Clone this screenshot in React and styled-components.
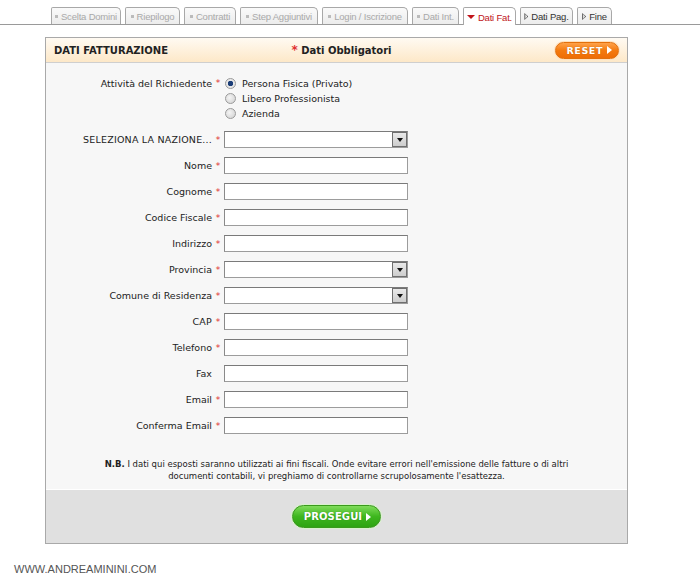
import React from "react";
import styled, { createGlobalStyle } from "styled-components";

const GlobalStyle = createGlobalStyle`
  body {
    margin: 0;
    background: #fff;
    font-family: "DejaVu Sans", Verdana, sans-serif;
  }
`;

const tabs = [
  { label: "Scelta Domini", state: "done", width: 70 },
  { label: "Riepilogo", state: "done", width: 55 },
  { label: "Contratti", state: "done", width: 52 },
  { label: "Step Aggiuntivi", state: "done", width: 78 },
  { label: "Login / Iscrizione", state: "done", width: 86 },
  { label: "Dati Int.", state: "done", width: 47 },
  { label: "Dati Fat.", state: "active", width: 53 },
  { label: "Dati Pag.", state: "next", width: 53 },
  { label: "Fine", state: "next", width: 35 },
];

const fields = [
  { label: "SELEZIONA LA NAZIONE...", required: true, select: true },
  { label: "Nome", required: true },
  { label: "Cognome", required: true },
  { label: "Codice Fiscale", required: true },
  { label: "Indirizzo", required: true },
  { label: "Provincia", required: true, select: true },
  { label: "Comune di Residenza", required: true, select: true },
  { label: "CAP", required: true },
  { label: "Telefono", required: true },
  { label: "Fax", required: false },
  { label: "Email", required: true },
  { label: "Conferma Email", required: true },
];

const App = () => {
  return (
    <>
      <GlobalStyle />
      <TabBar>
        {tabs.map((t) => (
          <Tab key={t.label} $state={t.state} style={{ width: t.width }}>
            {t.state === "done" && <Bullet />}
            {t.state === "active" && <DownArrow />}
            {t.state === "next" && <OutlineArrow />}
            {t.label}
          </Tab>
        ))}
      </TabBar>

      <Panel>
        <Header>
          <HeaderTitle>DATI FATTURAZIONE</HeaderTitle>
          <HeaderNote>
            <Star $big>*</Star> Dati Obbligatori
          </HeaderNote>
          <PillButton $color="orange" $small>
            RESET <Arrow />
          </PillButton>
        </Header>

        <Body>
          <RadioRow>
            <Label>Attività del Richiedente</Label>
            <Star>*</Star>
            <RadioList>
              <RadioItem>
                <Radio $checked />
                Persona Fisica (Privato)
              </RadioItem>
              <RadioItem>
                <Radio />
                Libero Professionista
              </RadioItem>
              <RadioItem>
                <Radio />
                Azienda
              </RadioItem>
            </RadioList>
          </RadioRow>

          <Fields>
            {fields.map((f) => (
              <FieldRow key={f.label}>
                <Label $caps={f.label === f.label.toUpperCase()}>{f.label}</Label>
                <Star>{f.required ? "*" : ""}</Star>
                <Input>
                  {f.select && (
                    <SelectButton>
                      <SelectArrow />
                    </SelectButton>
                  )}
                </Input>
              </FieldRow>
            ))}
          </Fields>

          <Note>
            <b>N.B.</b> I dati qui esposti saranno utilizzati ai fini fiscali. Onde evitare errori nell'emissione delle fatture o di altri
            <br />
            documenti contabili, vi preghiamo di controllarne scrupolosamente l'esattezza.
          </Note>
        </Body>

        <Footer>
          <PillButton $color="green">
            PROSEGUI <Arrow />
          </PillButton>
        </Footer>
      </Panel>

      <SiteName>WWW.ANDREAMININI.COM</SiteName>
    </>
  );
};

const TabBar = styled.div`
  display: flex;
  align-items: flex-end;
  gap: 4px;
  height: 25px;
  padding-left: 51px;
  border-bottom: 1px solid #9a9a9a;
  box-sizing: border-box;
`;

const Tab = styled.div`
  position: relative;
  box-sizing: border-box;
  height: ${(p) => (p.$state === "active" ? "18px" : "17px")};
  margin-bottom: ${(p) => (p.$state === "active" ? "-1px" : "0")};
  border: 1px solid #a8a8a8;
  border-bottom: none;
  border-radius: 2px 5px 0 0;
  background: ${(p) =>
    p.$state === "active" ? "#fff" : "linear-gradient(#fafafa, #ececec)"};
  color: ${(p) =>
    p.$state === "active" ? "#c0141a" : p.$state === "next" ? "#333" : "#a9a9a9"};
  font-family: "Liberation Sans", Arial, sans-serif;
  font-size: 9.5px;
  letter-spacing: -0.2px;
  display: flex;
  align-items: center;
  justify-content: center;
  white-space: nowrap;
  padding-top: 1px;
`;

const Bullet = styled.span`
  display: inline-block;
  width: 3px;
  height: 3px;
  background: #bbb;
  margin-right: 3px;
`;

const DownArrow = styled.span`
  display: inline-block;
  width: 0;
  height: 0;
  border-left: 4px solid transparent;
  border-right: 4px solid transparent;
  border-top: 4px solid #c0141a;
  margin-right: 3px;
`;

const OutlineArrow = styled.span`
  display: inline-block;
  width: 4px;
  height: 7px;
  margin-right: 3px;
  background: #555;
  clip-path: polygon(0 0, 100% 50%, 0 100%, 0 0, 1px 18%, 1px 82%, 72% 50%, 1px 18%);
`;

const Panel = styled.div`
  width: 583px;
  margin: 12px 0 0 45px;
  border: 1px solid #a9a9a9;
  box-sizing: border-box;
  background: #f7f7f7;
`;

const Header = styled.div`
  height: 24px;
  display: grid;
  grid-template-columns: 1fr auto 1fr;
  align-items: center;
  padding: 0 8px 0 8px;
  border-bottom: 1px solid #cfcfcf;
  background: linear-gradient(#fffaf2, #fde8c8);
`;

const HeaderTitle = styled.div`
  font-weight: bold;
  font-size: 10px;
  color: #222;
`;

const HeaderNote = styled.div`
  font-weight: bold;
  font-size: 10px;
  color: #222;
  padding-left: 10px;
`;

const Star = styled.span`
  color: #e03030;
  font-size: ${(p) => (p.$big ? "12px" : "9px")};
  font-weight: ${(p) => (p.$big ? "bold" : "normal")};
  text-align: center;
`;

const PillButton = styled.div`
  justify-self: ${(p) => (p.$small ? "end" : "center")};
  display: inline-flex;
  align-items: center;
  justify-content: center;
  gap: 4px;
  height: ${(p) => (p.$small ? "15px" : "21px")};
  padding: ${(p) => (p.$small ? "0 6px 0 10px" : "0 9px 0 11px")};
  border-radius: 12px;
  color: #fff;
  font-family: "DejaVu Sans", sans-serif;
  font-weight: bold;
  font-size: ${(p) => (p.$small ? "9.5px" : "10px")};
  letter-spacing: ${(p) => (p.$small ? "0.6px" : "0.1px")};
  text-shadow: 0 0 1px rgba(0, 0, 0, 0.3);
  border: 1px solid ${(p) => (p.$color === "green" ? "#3a9a1c" : "#e2700c")};
  background: ${(p) =>
    p.$color === "green"
      ? "linear-gradient(#7fdc5a, #3eb61e 50%, #2ea312)"
      : "linear-gradient(#ffa24a, #f47a0f 50%, #ee6d05)"};
  box-shadow: 0 0 0 1px ${(p) => (p.$color === "green" ? "#d8f2cc" : "#ffe1bf")};
`;

const Arrow = styled.span`
  display: inline-block;
  width: 0;
  height: 0;
  border-top: 4px solid transparent;
  border-bottom: 4px solid transparent;
  border-left: 5px solid #fff;
`;

const Body = styled.div`
  padding: 13px 0 0 0;
  border-bottom: 1px solid #fff;
`;

const rowGrid = `
  display: grid;
  grid-template-columns: 166px 12px 184px;
  column-gap: 0;
`;

const RadioRow = styled.div`
  ${rowGrid}
  align-items: start;
  line-height: 15px;
`;

const Label = styled.div`
  text-align: right;
  font-size: 9.5px;
  letter-spacing: ${(p) => (p.$caps ? "0.2px" : "0")};
  color: #222;
  white-space: nowrap;
  line-height: 15px;
`;

const RadioList = styled.div`
  display: flex;
  flex-direction: column;
  padding-left: 1px;
`;

const RadioItem = styled.label`
  display: flex;
  align-items: center;
  gap: 6px;
  height: 15px;
  font-size: 9.5px;
  color: #222;
`;

const Radio = styled.span`
  width: 9px;
  height: 9px;
  border-radius: 50%;
  border: 1px solid #9a9a9a;
  background: ${(p) =>
    p.$checked
      ? "radial-gradient(circle, #1c3e78 0 2.5px, #e8e8e8 3px)"
      : "radial-gradient(circle at 40% 40%, #f4f4f4, #cfcfcf)"};
`;

const Fields = styled.div`
  display: flex;
  flex-direction: column;
  gap: 9px;
  margin-top: 10px;
`;

const FieldRow = styled.div`
  ${rowGrid}
  align-items: center;
`;

const Input = styled.div`
  position: relative;
  height: 17px;
  box-sizing: border-box;
  background: #fff;
  border: 1px solid #9c9c9c;
  border-top-color: #7a7a7a;
  border-left-color: #8a8a8a;
`;

const SelectButton = styled.div`
  position: absolute;
  top: 0;
  right: 0;
  bottom: 0;
  width: 15px;
  box-sizing: border-box;
  border: 1px solid #6f6f6f;
  background: linear-gradient(#e9e9e9, #cdcdcd);
  display: flex;
  align-items: center;
  justify-content: center;
`;

const SelectArrow = styled.span`
  width: 0;
  height: 0;
  border-left: 3.5px solid transparent;
  border-right: 3.5px solid transparent;
  border-top: 4px solid #111;
`;

const Note = styled.p`
  margin: 24px 0 0;
  padding-bottom: 7px;
  text-align: center;
  font-size: 8.5px;
  line-height: 12px;
  color: #222;
`;

const Footer = styled.div`
  height: 53px;
  background: #e0e0e0;
  display: flex;
  align-items: center;
  justify-content: center;
`;

const SiteName = styled.div`
  margin: 19px 0 0 14px;
  font-family: "Liberation Sans", Arial, sans-serif;
  font-size: 11px;
  color: #555;
`;

export default App;
